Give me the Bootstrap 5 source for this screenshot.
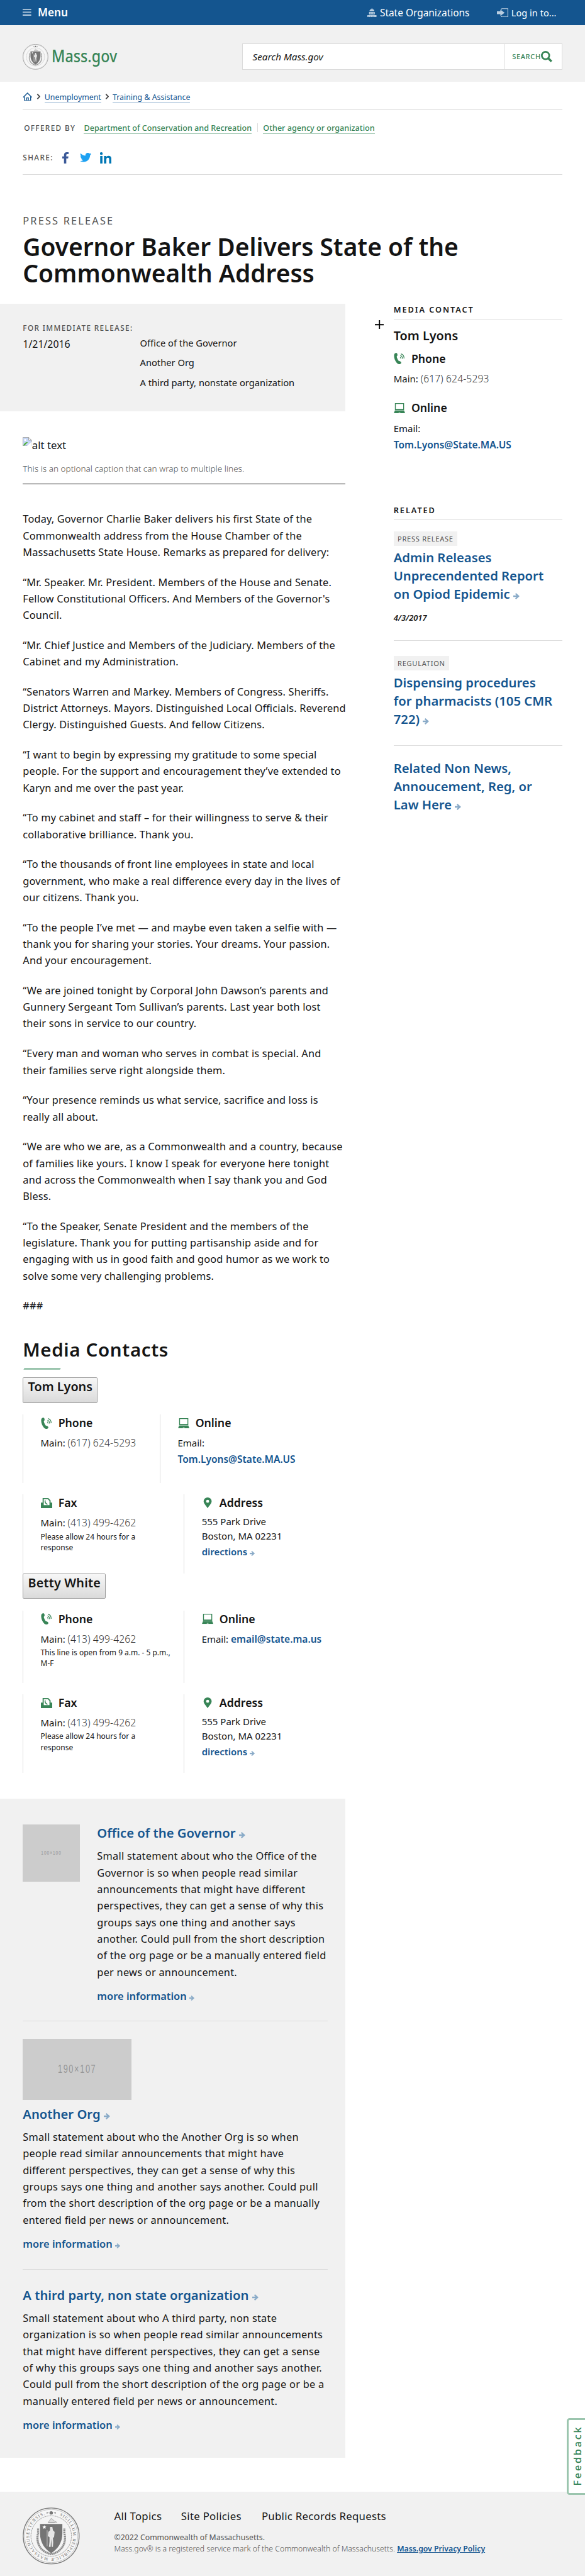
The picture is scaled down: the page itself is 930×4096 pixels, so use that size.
<!DOCTYPE html>
<html lang="en">
<head>
<meta charset="utf-8">
<meta name="viewport" content="width=device-width, initial-scale=1">
<title>Governor Baker Delivers State of the Commonwealth Address | Mass.gov</title>
<link rel="stylesheet" href="https://cdn.jsdelivr.net/npm/bootstrap@5.3.0/dist/css/bootstrap.min.css">
<style>
html{font-size:9.082px}
body{font-family:"Noto Sans","Open Sans",sans-serif;font-size:1.6rem;color:#141414;line-height:1.5;background:#fff;position:relative;width:102.4rem;height:451rem;overflow:hidden;font-feature-settings:"liga" 1}
a{color:#14558f;text-decoration:none}
p,h1,h2,h3,h4,figure{margin:0}
svg{display:block;flex:none}
.wrap{padding:0 4rem}
.nw{white-space:nowrap}
.semi{font-weight:600}
.topbar{height:4.4rem;background:#14558f;color:#fff}
.topbar .menu-t{font-size:1.9rem;font-weight:600;line-height:2.4rem}
.topbar .util-t{font-size:1.7rem;line-height:2.4rem;padding-top:.2rem}
.ico-pale{color:#b9cde0}
.band{height:9.9rem;background:#f1f1f1;padding-top:.1rem}
.brand-seal{width:4.5rem;height:4.5rem;margin-top:1.1rem}
.brand-t{font-size:2.9rem;line-height:4rem;font-weight:500;color:#388557;padding-top:.8rem}
.brand-t span{display:inline-block;transform:scaleX(.885);transform-origin:left}
.searchbox{position:absolute;left:42.4rem;top:7.6rem;width:56rem;height:4.6rem;border:.2rem solid #dcdcdc;background:#fff}
.searchbox .q{flex:1;font-style:italic;font-size:1.68rem;padding-left:1.7rem;padding-top:.2rem}
.searchbox .go{width:10.1rem;border-left:.2rem solid #dcdcdc;font-size:1.22rem;font-weight:500;letter-spacing:.07rem;color:#388557;padding-left:1.35rem}
.crumbs{height:4.95rem;border-bottom:.15rem solid #dcdcdc;font-size:1.36rem;line-height:1.9rem;padding-top:.4rem}
.crumbs a,.offered a{border-bottom:.2rem solid #8fb0d0;line-height:1.8rem;margin-top:.4rem}
.offered{margin-top:2.1rem;height:2rem;font-size:1.39rem;line-height:2rem}
.offered a{color:#388557;border-color:#9bc5ae;font-weight:500}
.label{letter-spacing:.15rem;color:#535353;font-weight:500;font-size:1.3rem;text-transform:uppercase}
.offered .bar{width:.1rem;height:1.5rem;background:#dcdcdc}
.share{margin-top:3.05rem;height:4.25rem;border-bottom:.15rem solid #dcdcdc}
.kicker{margin-top:6.95rem;font-size:1.8rem;line-height:2.4rem;letter-spacing:.24rem;color:#535353}
h1{margin-top:.91rem;font-size:4.28rem;line-height:4.59rem;font-weight:600;height:12.3rem}
.maincol{width:60.4rem}
.side{width:29.5rem;margin-left:8.5rem;position:relative}
.release{height:18.8rem;background:#f1f1f1;padding:3.2rem 0 0 4rem}
.release .date{font-size:1.75rem;line-height:2.4rem;width:20.5rem;padding-top:.1rem}
.release .orgs{font-size:1.62rem;line-height:2rem}
.release .orgs div{margin-bottom:1.47rem}
figure{margin:4.5rem 0 0 4rem!important;height:8.3rem;border-bottom:.2rem solid #141414}
figure .alt{font-size:1.85rem;line-height:2.4rem}
figcaption{font-size:1.495rem;line-height:2.4rem;font-weight:300;color:#535353;margin-top:1.65rem}
.story{margin:4.65rem 0 0 4rem;height:144.9rem;font-size:1.8rem;letter-spacing:.018rem;line-height:2.89rem}
.story p{margin-bottom:2.37rem}
h2{margin-left:4rem;font-size:3.25rem;line-height:4rem;font-weight:580;letter-spacing:.07rem}
.slash{margin:1.15rem 0 1.3rem 4.2rem;width:6.4rem;height:.35rem;background:#9bc5ae;transform:skewX(-25deg)}
.namebtn{display:block;margin-left:4rem;height:4.5rem;border:1px solid #999;border-radius:.2rem;background:linear-gradient(#f7f7f7,#dadada);padding:0 .75rem 1.2rem .8rem;font-size:2.18rem;line-height:2.6rem;font-weight:600;color:#141414}
.namebtn.wide{letter-spacing:.02rem}
.crow{margin:2rem 0 0 4rem;width:56.4rem}
.ccol{border-left:1px solid #dcdcdc;padding:.22rem 0 0 3rem}
.chead{font-size:1.95rem;line-height:2.6rem;font-weight:600;height:2.6rem}
.chead svg{margin-right:1.1rem}
.cval{font-size:1.65rem;line-height:2.4rem;margin-top:1.06rem}
.cval a{font-weight:600}
.cval a.big{font-size:1.71rem}
.cval .num{font-weight:300;font-size:1.72rem;letter-spacing:.015rem;line-height:1;color:#333}
.cnote{font-size:1.32rem;line-height:1.9rem;margin-top:.15rem}
.addr{font-size:1.655rem;line-height:2.5rem;margin-top:.7rem}
.arr{display:inline-block;color:#8aabc8;vertical-align:-.05em}
.orgbox{margin-top:4.5rem;height:115.4rem;background:#f1f1f1;padding:4.5rem 3rem 0 4rem}
.org h3{font-size:2.23rem;line-height:3rem;font-weight:570}
.org h3 a,.org .more{color:#14558f}
.org p{font-size:1.8rem;letter-spacing:.028rem;line-height:2.9rem;margin-top:1.1rem}
.org .more{font-size:1.81rem;font-weight:580;line-height:2.4rem;margin-top:1.57rem}
.ph{background:#ccc;color:#969696;font-family:"Liberation Sans Narrow","Liberation Sans",sans-serif;flex:none}
.ph b{font-weight:400;display:block;transform:scaleX(.72)}
.rule{height:.1rem;background:#dcdcdc}
.side h4{font-size:1.4rem;line-height:2rem;font-weight:600;letter-spacing:.215rem;text-transform:uppercase;border-bottom:.2rem solid #dcdcdc;white-space:nowrap}
.tagx{display:inline-block;background:#f1f1f1;height:2.5rem;line-height:2.5rem;font-size:1.22rem;letter-spacing:.08rem;padding:.12rem .7rem 0;color:#535353;vertical-align:top;text-transform:uppercase}
.rel{font-size:2.23rem;line-height:3.2rem;font-weight:570;color:#14558f;padding-top:.16rem;margin-bottom:-.16rem}
.plus{position:absolute;left:-3.3rem;top:2.8rem}
.feedback{position:absolute;left:99.2rem;top:423.4rem;width:4rem;height:13.4rem;border:.35rem solid #9bc5ae;border-radius:.5rem;background:#fff;color:#388557;font-weight:500;font-size:1.8rem;letter-spacing:.3rem}
.feedback span.fb{writing-mode:vertical-rl;transform:rotate(180deg);display:block;line-height:2.4rem;margin-left:.4rem;height:12.5rem;text-align:center}
footer{position:absolute;left:0;right:0;top:436.3rem;height:14.7rem;background:#f1f1f1}
.foot-links{font-size:1.85rem;letter-spacing:.03rem;line-height:2.4rem}
</style>
</head>
<body>
<svg width="0" height="0" class="position-absolute">
  <symbol id="arrow" viewBox="0 0 10 10"><path d="M0 3.7h5L3 1.4 4.4 0 10 5l-5.6 5L3 8.6l2-2.3H0z" fill="currentColor"/></symbol>
  <symbol id="phone" viewBox="0 0 20 20"><g fill="#388557"><path d="M1 2.2C2 .4 4.500-.4 5.600.8 6.700 2 6.800 4.600 5.900 5.600 4.900 6.500 5 7 5.800 9c1 2.400 1.800 4 2.800 5 1 .6 2.600.4 4 2 .9 1.200.6 2.600-.8 3.400-2.200 1.200-5 .2-7-2.400C1.800 13.500-.6 6.500 1 2.200z"/></g><g fill="none" stroke="#388557" stroke-width="1.300"><path d="M11 7.500c1 .5 1.600 1.500 1.500 3M11.500 4.700c2.300.7 3.800 2.800 3.700 5.800M12.500 1.800c3.400 1 5.600 4.200 5.500 8"/></g></symbol>
  <symbol id="laptop" viewBox="0 0 20 18"><path fill="#388557" fill-rule="evenodd" d="M2 0h16v12H2zM3.500 1.500v8.800h13V1.500z"/><path fill="#388557" d="M2 12.600h16l2 5.400H0z"/><path fill="#fff" d="M8.500 16.200h3v1h-3z"/></symbol>
  <symbol id="fax" viewBox="0 0 20 18"><path fill="#388557" fill-rule="evenodd" d="M3 0h10l4 4v4h3v10H0V8h3zM5 2v10.500h10V5L12 2z"/><path d="M7.500 4c-.6 3 1 6 4 7" fill="none" stroke="#388557" stroke-width="1.800"/></symbol>
  <symbol id="pin" viewBox="0 0 14 19"><path fill="#388557" fill-rule="evenodd" d="M7 0a7 7 0 0 1 7 7c0 4-4 7-7 12C4 14 0 11 0 7a7 7 0 0 1 7-7zm0 4.200a2.600 2.600 0 1 0 0 5.200 2.600 2.600 0 0 0 0-5.200z"/></symbol>
  <symbol id="crest" viewBox="0 0 100 100">
    <circle cx="50" cy="50" r="49" fill="#f7f7f7" stroke="#7c7c7c" stroke-width="1.500"/>
    <circle cx="50" cy="50" r="46.600" fill="none" stroke="#9a9a9a" stroke-width=".6"/>
    <circle cx="50" cy="50" r="35.500" fill="#f4f4f4" stroke="#999" stroke-width="1.300" stroke-dasharray="1 .8"/>
    <path d="M42 8.200l4 1.300-4 1.300zM58 8.200l-4 1.300 4 1.300zM47 9.500a3 3 0 0 1 6 0 3 3 0 0 1-6 0" fill="#777"/>
    <path d="M45 26l5-7 6 5 4 2zM44 27h12" fill="#ddd" stroke="#888" stroke-width=".7"/>
    <path d="M27 37v8c-3 12 0 24 11 32 5 3 9 4 12 5 3-1 7-2 12-5 11-8 14-20 11-32v-8" fill="none" stroke="#8b8b8b" stroke-width="3.600" stroke-dasharray="2.500 .7"/>
    <path d="M30.500 29h39v17c0 15-8 27-19.500 34-11.500-7-19.500-19-19.500-34z" fill="#757575"/>
    <path d="M38 31l1 2.200 2.400.2-1.800 1.700.5 2.400-2.100-1.200-2.100 1.200.5-2.400-1.800-1.700 2.400-.2z" fill="#fff"/>
    <path d="M48 34h4l1 6 3 3-1 9-2 1 .5 8-.5 8h-2l-1-14-1 14h-3l1-9v-8l-3-2 1-7 3-3zM42.500 40h.8v28h-.8z" fill="#e6e6e6"/>
  </symbol>
</svg>

<header>
  <div class="topbar wrap d-flex align-items-center">
    <svg style="width:1.5rem;height:1.3rem" viewBox="0 0 15 13" class="ico-pale"><path fill="currentColor" d="M0 0h15v2H0zM0 5h15v2H0zM0 10h15v2H0z"/></svg>
    <span class="menu-t nw" style="margin-left:1.1rem">Menu</span>
    <div class="d-flex align-items-center ms-auto" style="width:34.1rem">
      <svg class="ico-pale" style="width:1.6rem;height:1.6rem" viewBox="0 0 16 16"><path fill="currentColor" fill-rule="evenodd" d="M7.500 0h1v1.500c2.500.4 3.600 2 3.800 4H3.700c.2-2 1.300-3.600 3.800-4zM3 6.500h10V11H3zM5 8v1.500h1.200V8zM7.400 8v1.500h1.200V8zM9.800 8v1.500H11V8zM0 12h16v4H0zm2 1.300v1.200h1.200v-1.200zm2.900 0v1.200h1.200v-1.200zm2.900 0v1.200H9v-1.200zm2.900 0v1.200h1.200v-1.200z"/></svg>
      <span class="util-t nw" style="margin-left:.6rem;width:20.5rem">State Organizations</span>
      <svg class="ico-pale" style="width:2rem;height:1.600rem" viewBox="0 0 20 16"><path fill="currentColor" d="M0 5.500h6V2.500l7.500 5.500L6 13.500v-3H0z"/><path d="M8 .8h11.200v14.400H8M8 .8v2M8 15.200v-2" fill="none" stroke="currentColor" stroke-width="1.300"/></svg>
      <span class="util-t nw" style="margin-left:.5rem;font-size:1.610rem">Log in to...</span>
    </div>
  </div>
  <div class="band wrap d-flex align-items-center">
    <svg class="brand-seal"><use href="#crest"/></svg>
    <span class="brand-t nw" style="margin-left:.5rem"><span>Mass.gov</span></span>
    <div class="searchbox d-flex align-items-stretch">
      <div class="q d-flex align-items-center nw">Search Mass.gov</div>
      <div class="go d-flex align-items-center nw">SEARCH
        <svg style="width:2rem;height:2rem" viewBox="0 0 20 20"><circle cx="8" cy="8" r="6.500" fill="none" stroke="#388557" stroke-width="3"/><path d="M12.500 12.500l6 6" stroke="#388557" stroke-width="3.800"/></svg>
      </div>
    </div>
  </div>
</header>

<div class="wrap">
  <nav class="crumbs d-flex align-items-center nw">
    <svg style="width:1.700rem;height:1.500rem" viewBox="0 0 17 15"><path d="M1 8.500L8.500 1 16 8.500M3 7v7.200h11V7M7 14v-4.500h3V14" fill="none" stroke="#14558f" stroke-width="1.500"/></svg>
    <svg style="width:.7rem;height:1rem;margin:0 .7rem" viewBox="0 0 7 10"><path d="M1.500.8l4 4.200-4 4.200" fill="none" stroke="#444" stroke-width="2"/></svg>
    <a href="#">Unemployment</a>
    <svg style="width:.7rem;height:1rem;margin:0 .65rem" viewBox="0 0 7 10"><path d="M1.500.8l4 4.200-4 4.200" fill="none" stroke="#444" stroke-width="2"/></svg>
    <a href="#">Training &amp; Assistance</a>
  </nav>
  <div class="offered d-flex align-items-center nw">
    <span class="label" style="width:10.7rem;padding-left:.2rem">Offered by</span>
    <a href="#">Department of Conservation and Recreation</a>
    <span class="bar" style="margin:0 .95rem"></span>
    <a href="#">Other agency or organization</a>
  </div>
  <div class="share d-flex align-items-start nw">
    <span class="label" style="line-height:2.4rem;width:6.9rem">Share:</span>
    <svg style="width:1.100rem;height:2rem;margin:.2rem 2rem 0 0" viewBox="0 0 11 20"><path fill="#3b5998" d="M3 20v-9H0V7.500h3V5c0-3.200 1.900-5 4.800-5H11v3.300H9C7.500 3.300 7 4 7 5.300v2.200h3.800l-.6 3.500H7v9z"/></svg>
    <svg style="width:2rem;height:1.600rem;margin:.4rem 1.500rem 0 0" viewBox="0 0 20 16"><path fill="#1da1f2" d="M20 1.900c-.7.300-1.500.5-2.400.6.900-.5 1.500-1.300 1.800-2.200-.8.500-1.700.8-2.600 1A4.100 4.100 0 0 0 9.800 5C6.400 4.900 3.400 3.300 1.400.8c-1.100 1.900-.5 4.300 1.300 5.400-.7 0-1.300-.2-1.900-.5 0 2 1.400 3.600 3.300 4-.6.200-1.200.2-1.900.1.500 1.600 2 2.800 3.800 2.800A8.200 8.200 0 0 1 0 14.400 11.600 11.600 0 0 0 6.300 16c7.500 0 11.700-6.300 11.600-12C18.800 3.500 19.500 2.700 20 1.900z"/></svg>
    <svg style="width:2rem;height:2rem;margin-top:.2rem" viewBox="0 0 20 20"><path fill="#0077b5" d="M.3 6.600h4V20h-4zM2.300 0a2.400 2.400 0 1 1 0 4.800 2.400 2.400 0 0 1 0-4.800zM7 6.600h4v1.900c.6-1.200 2-2.200 4-2.200 4 0 5 2.600 5 6.300V20h-4v-6.600c0-1.800 0-3.700-2.300-3.700-2.200 0-2.600 1.700-2.600 3.500V20H7z"/></svg>
  </div>
  <div class="kicker nw">PRESS RELEASE</div>
  <h1 class="nw">Governor Baker Delivers State of the<br>Commonwealth Address</h1>
</div>

<div class="d-flex align-items-start">
<main class="maincol">
  <div class="release nw">
    <div class="label" style="line-height:2rem">For Immediate Release:</div>
    <div class="d-flex" style="margin-top:.6rem">
      <div class="date">1/21/2016</div>
      <div class="orgs"><div>Office of the Governor</div><div>Another Org</div><div>A third party, nonstate organization</div></div>
    </div>
  </div>
  <figure>
    <div class="d-flex align-items-start">
      <svg style="width:1.600rem;height:1.600rem" viewBox="0 0 16 16"><path d="M.5.5h10l5 5v10H.500z" fill="#c6d7f7" stroke="#a0a0a0"/><path d="M10.500.5l5 5h-5z" fill="#fff" stroke="#a0a0a0"/><circle cx="4.500" cy="5" r="1.800" fill="#fff"/><path d="M1 15c2-5 5-6.500 8-6l-6 6z" fill="#4cae32"/><path d="M16 8v8H7z" fill="#fff"/></svg>
      <span class="alt nw" style="margin-top:.3rem">alt text</span>
    </div>
    <figcaption class="nw">This is an optional caption that can wrap to multiple lines.</figcaption>
  </figure>
  <article class="story nw">
    <p>Today, Governor Charlie Baker delivers his first State of the<br>Commonwealth address from the House Chamber of the<br>Massachusetts State House. Remarks as prepared for delivery:</p>
    <p>“Mr. Speaker. Mr. President. Members of the House and Senate.<br>Fellow Constitutional Officers. And Members of the Governor's<br>Council.</p>
    <p>“Mr. Chief Justice and Members of the Judiciary. Members of the<br>Cabinet and my Administration.</p>
    <p>“Senators Warren and Markey. Members of Congress. Sheriffs.<br>District Attorneys. Mayors. Distinguished Local Officials. Reverend<br>Clergy. Distinguished Guests. And fellow Citizens.</p>
    <p>“I want to begin by expressing my gratitude to some special<br>people. For the support and encouragement they’ve extended to<br>Karyn and me over the past year.</p>
    <p>“To my cabinet and staff – for their willingness to serve &amp; their<br>collaborative brilliance. Thank you.</p>
    <p>“To the thousands of front line employees in state and local<br>government, who make a real difference every day in the lives of<br>our citizens. Thank you.</p>
    <p>“To the people I’ve met — and maybe even taken a selfie with —<br>thank you for sharing your stories. Your dreams. Your passion.<br>And your encouragement.</p>
    <p>“We are joined tonight by Corporal John Dawson’s parents and<br>Gunnery Sergeant Tom Sullivan’s parents. Last year both lost<br>their sons in service to our country.</p>
    <p>“Every man and woman who serves in combat is special. And<br>their families serve right alongside them.</p>
    <p>“Your presence reminds us what service, sacrifice and loss is<br>really all about.</p>
    <p>“We are who we are, as a Commonwealth and a country, because<br>of families like yours. I know I speak for everyone here tonight<br>and across the Commonwealth when I say thank you and God<br>Bless.</p>
    <p>“To the Speaker, Senate President and the members of the<br>legislature. Thank you for putting partisanship aside and for<br>engaging with us in good faith and good humor as we work to<br>solve some very challenging problems.</p>
    <p>###</p>
  </article>

  <h2 class="nw">Media Contacts</h2>
  <div class="slash"></div>
  <button type="button" class="namebtn nw">Tom Lyons</button>
  <div class="crow d-flex nw" style="height:12rem">
    <div class="ccol" style="width:24rem">
      <div class="chead d-flex align-items-center"><svg style="width:2rem;height:2rem"><use href="#phone"/></svg>Phone</div>
      <div class="cval">Main: <span class="num">(617) 624-5293</span></div>
    </div>
    <div class="ccol">
      <div class="chead d-flex align-items-center"><svg style="width:2rem;height:1.800rem"><use href="#laptop"/></svg>Online</div>
      <div class="cval">Email:</div>
      <div class="cval" style="margin-top:.450rem"><a href="#" class="big">Tom.Lyons@State.MA.US</a></div>
    </div>
  </div>
  <div class="crow d-flex nw" style="height:13.800rem">
    <div class="ccol" style="width:28.200rem">
      <div class="chead d-flex align-items-center"><svg style="width:2rem;height:1.800rem"><use href="#fax"/></svg>Fax</div>
      <div class="cval">Main: <span class="num">(413) 499-4262</span></div>
      <div class="cnote">Please allow 24 hours for a<br>response</div>
    </div>
    <div class="ccol">
      <div class="chead d-flex align-items-center"><svg style="width:2rem;height:1.900rem"><use href="#pin"/></svg>Address</div>
      <div class="addr">555 Park Drive<br>Boston, MA 02231</div>
      <div class="cval" style="margin-top:.400rem"><a href="#">directions <svg class="arr" style="width:.900rem;height:.900rem"><use href="#arrow"/></svg></a></div>
    </div>
  </div>
  <button type="button" class="namebtn wide nw">Betty White</button>
  <div class="crow d-flex nw" style="height:12.700rem">
    <div class="ccol" style="width:28.200rem">
      <div class="chead d-flex align-items-center"><svg style="width:2rem;height:2rem"><use href="#phone"/></svg>Phone</div>
      <div class="cval">Main: <span class="num">(413) 499-4262</span></div>
      <div class="cnote">This line is open from 9 a.m. - 5 p.m.,<br>M-F</div>
    </div>
    <div class="ccol">
      <div class="chead d-flex align-items-center"><svg style="width:2rem;height:1.800rem"><use href="#laptop"/></svg>Online</div>
      <div class="cval">Email: <a href="#" class="big">email@state.ma.us</a></div>
    </div>
  </div>
  <div class="crow d-flex nw" style="height:13.800rem">
    <div class="ccol" style="width:28.200rem">
      <div class="chead d-flex align-items-center"><svg style="width:2rem;height:1.800rem"><use href="#fax"/></svg>Fax</div>
      <div class="cval">Main: <span class="num">(413) 499-4262</span></div>
      <div class="cnote">Please allow 24 hours for a<br>response</div>
    </div>
    <div class="ccol">
      <div class="chead d-flex align-items-center"><svg style="width:2rem;height:1.900rem"><use href="#pin"/></svg>Address</div>
      <div class="addr">555 Park Drive<br>Boston, MA 02231</div>
      <div class="cval" style="margin-top:.400rem"><a href="#">directions <svg class="arr" style="width:.900rem;height:.900rem"><use href="#arrow"/></svg></a></div>
    </div>
  </div>

  <section class="orgbox nw">
    <div class="org d-flex" style="height:34.400rem">
      <div class="ph d-flex align-items-center justify-content-center" style="width:10rem;height:10rem;margin-right:3rem;font-size:1rem;letter-spacing:.15rem"><b>100×100</b></div>
      <div>
        <h3><a href="#">Office of the Governor <svg class="arr" style="width:1.100rem;height:1.100rem"><use href="#arrow"/></svg></a></h3>
        <p>Small statement about who the Office of the<br>Governor is so when people read similar<br>announcements that might have different<br>perspectives, they can get a sense of why this<br>groups says one thing and another says<br>another. Could pull from the short description<br>of the org page or be a manually entered field<br>per news or announcement.</p>
        <div class="more">more information <svg class="arr" style="width:.900rem;height:.900rem"><use href="#arrow"/></svg></div>
      </div>
    </div>
    <div class="rule"></div>
    <div class="org" style="height:43.300rem;padding-top:3rem">
      <div class="ph d-flex align-items-center justify-content-center" style="width:19rem;height:10.700rem;font-size:1.950rem;letter-spacing:.250rem"><b>190×107</b></div>
      <h3 style="margin-top:1rem"><a href="#">Another Org <svg class="arr" style="width:1.100rem;height:1.100rem"><use href="#arrow"/></svg></a></h3>
      <p>Small statement about who the Another Org is so when<br>people read similar announcements that might have<br>different perspectives, they can get a sense of why this<br>groups says one thing and another says another. Could pull<br>from the short description of the org page or be a manually<br>entered field per news or announcement.</p>
      <div class="more">more information <svg class="arr" style="width:.900rem;height:.900rem"><use href="#arrow"/></svg></div>
    </div>
    <div class="rule"></div>
    <div class="org" style="padding-top:3rem">
      <h3><a href="#">A third party, non state organization <svg class="arr" style="width:1.100rem;height:1.100rem"><use href="#arrow"/></svg></a></h3>
      <p>Small statement about who A third party, non state<br>organization is so when people read similar announcements<br>that might have different perspectives, they can get a sense<br>of why this groups says one thing and another says another.<br>Could pull from the short description of the org page or be a<br>manually entered field per news or announcement.</p>
      <div class="more">more information <svg class="arr" style="width:.900rem;height:.900rem"><use href="#arrow"/></svg></div>
    </div>
  </section>
</main>

<aside class="side nw">
  <svg class="plus" style="width:1.600rem;height:1.600rem" viewBox="0 0 16 16"><path d="M8 0v16M0 8h16" stroke="#000" stroke-width="2"/></svg>
  <h4 style="padding-bottom:.600rem">Media Contact</h4>
  <div class="semi" style="font-size:2.180rem;line-height:2.600rem;margin-top:1.520rem">Tom Lyons</div>
  <div class="chead d-flex align-items-center" style="margin-top:1.470rem"><svg style="width:2rem;height:2rem"><use href="#phone"/></svg>Phone</div>
  <div class="cval" style="margin-top:1.080rem">Main: <span class="num">(617) 624-5293</span></div>
  <div class="chead d-flex align-items-center" style="margin-top:2.600rem"><svg style="width:2rem;height:1.800rem"><use href="#laptop"/></svg>Online</div>
  <div class="cval" style="margin-top:1.080rem">Email:</div>
  <div class="cval" style="margin-top:.500rem"><a href="#" class="big">Tom.Lyons@State.MA.US</a></div>
  <h4 style="margin-top:9.160rem;padding-bottom:.620rem">Related</h4>
  <div style="margin-top:2rem;height:2.850rem"><span class="tagx">Press Release</span></div>
  <div class="rel">Admin Releases<br>Unprecendented Report<br>on Opiod Epidemic <svg class="arr" style="width:1.100rem;height:1.100rem"><use href="#arrow"/></svg></div>
  <div class="fst-italic semi" style="font-size:1.420rem;line-height:2rem;padding-top:1.660rem">4/3/2017</div>
  <div class="rule" style="margin-top:2.890rem"></div>
  <div style="margin-top:2.750rem;height:2.850rem"><span class="tagx">Regulation</span></div>
  <div class="rel">Dispensing procedures<br>for pharmacists (105 CMR<br>722) <svg class="arr" style="width:1.100rem;height:1.100rem"><use href="#arrow"/></svg></div>
  <div class="rule" style="margin-top:3.110rem"></div>
  <div class="rel" style="margin-top:2.200rem">Related Non News,<br>Annoucement, Reg, or<br>Law Here <svg class="arr" style="width:1.100rem;height:1.100rem"><use href="#arrow"/></svg></div>
</aside>
</div>

<footer class="wrap d-flex nw">
  <svg style="width:10rem;height:10rem;margin:2.700rem 6rem 0 0" viewBox="0 0 100 100"><use href="#crest" width="100" height="100"/>
    <path id="ring" d="M50 11.500a38.500 38.500 0 1 1-.01 0" fill="none"/>
    <text font-family="Liberation Serif" font-size="7.600" fill="#6c6c6c"><textPath href="#ring" startOffset="15" textLength="215">SIGILLUM REIPUBLICÆ MASSACHUSETTENSIS.</textPath></text>
  </svg>
  <div style="padding-top:3rem">
    <div class="foot-links d-flex"><span style="width:11.700rem">All Topics</span><span style="width:14.100rem">Site Policies</span><span>Public Records Requests</span></div>
    <div style="font-size:1.351rem;line-height:2.060rem;margin-top:1.560rem;color:#535353">©2022 Commonwealth of Massachusetts.<br><span class="fw-light">Mass.gov® is a registered service mark of the Commonwealth of Massachusetts.</span> <a href="#" class="semi text-decoration-underline">Mass.gov Privacy Policy</a></div>
  </div>
</footer>
<div class="feedback"><span class="fb">Feedback</span></div>
<script src="https://cdn.jsdelivr.net/npm/bootstrap@5.3.0/dist/js/bootstrap.bundle.min.js"></script>
</body>
</html>
